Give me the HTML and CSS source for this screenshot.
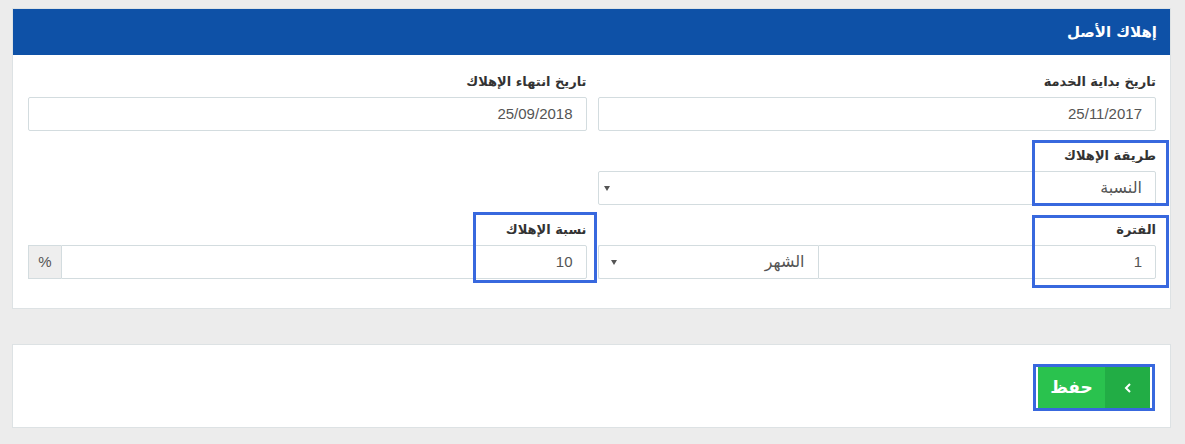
FILE: index.html
```html
<!DOCTYPE html>
<html lang="ar" dir="rtl">
<head>
    <meta charset="UTF-8">
    <title>إهلاك الأصل</title>
    <link rel="stylesheet" href="styles.css">
</head>
<body>
    <div class="page">
        <!-- لوحة الإهلاك -->
        <div class="panel">
            <div class="panel-head">إهلاك الأصل</div>
            <div class="panel-body">
                <div class="row">
                    <div class="group">
                        <label>تاريخ بداية الخدمة</label>
                        <div class="field">25/11/2017</div>
                    </div>
                    <div class="group">
                        <label>تاريخ انتهاء الإهلاك</label>
                        <div class="field">25/09/2018</div>
                    </div>
                </div>
                <div class="row">
                    <div class="group">
                        <label>طريقة الإهلاك</label>
                        <div class="field select">النسبة</div>
                    </div>
                    <div class="group"></div>
                </div>
                <div class="row">
                    <div class="group">
                        <label>الفترة</label>
                        <div class="combo">
                            <div class="field period">1</div>
                            <div class="field select unit">الشهر</div>
                        </div>
                    </div>
                    <div class="group">
                        <label>نسبة الإهلاك</label>
                        <div class="combo">
                            <div class="field rate">10</div>
                            <div class="addon">%</div>
                        </div>
                    </div>
                </div>
            </div>
        </div>

        <!-- الحفظ -->
        <div class="panel actions">
            <button class="save">
                <span class="save-arrow">
                    <svg width="8" height="10" viewBox="0 0 8 10"><path d="M6 1 L2 5 L6 9" fill="none" stroke="#fff" stroke-width="2"/></svg>
                </span>
                <span class="save-text">حفظ</span>
            </button>
        </div>
    </div>

    <!-- مربعات التحديد -->
    <div class="mark mark-method"></div>
    <div class="mark mark-period"></div>
    <div class="mark mark-rate"></div>
    <div class="mark mark-save"></div>
</body>
</html>
```

FILE: styles.css
```css
/*初始化*/
html, body{
    margin: 0;
    padding: 0;
}
body{
    background: #ececec;
    font-family: "Liberation Sans", "DejaVu Sans", sans-serif;
    color: #333;
    position: relative;
    height: 444px;
    overflow: hidden;
}

.page{
    padding: 8px 14px 0 12px;
}

/*1.面板*/
.panel{
    background: #fff;
    border: 1px solid #dde2e4;
}
.panel-head{
    background: #0e51a7;
    color: #fff;
    height: 46px;
    line-height: 46px;
    padding-right: 13px;
    font-family: "DejaVu Sans", sans-serif;
    font-weight: bold;
    font-size: 15px;
}
.panel-body{
    padding: 18px 14px 29px 15px;
}

/*2.表单行*/
.row{
    display: grid;
    grid-template-columns: 1fr 1fr;
    column-gap: 11px;
    margin-bottom: 16px;
}
.row:last-child{
    margin-bottom: 0;
}
label{
    display: block;
    height: 17px;
    line-height: 17px;
    margin-bottom: 7px;
    font-family: "DejaVu Sans", sans-serif;
    font-weight: bold;
    font-size: 13px;
    color: #333;
}
.field{
    height: 34px;
    box-sizing: border-box;
    border: 1px solid #d3dcdf;
    border-radius: 2px;
    padding: 0 13px;
    line-height: 32px;
    font-size: 15px;
    color: #555;
    background: #fff;
}

/*3.下拉框*/
.select{
    position: relative;
    font-family: "DejaVu Sans", sans-serif;
    font-size: 16px;
}
.select::after{
    content: "";
    position: absolute;
    left: 5px;
    top: 14px;
    border-top: 5px solid #555;
    border-left: 3px solid transparent;
    border-right: 3px solid transparent;
}
.unit::after{
    left: 12px;
}

/*4.组合输入*/
.combo{
    display: flex;
}
.period{
    flex: 1;
    border-radius: 0 2px 2px 0;
}
.unit{
    width: 220px;
    border-right: none;
    border-radius: 2px 0 0 2px;
}
.rate{
    flex: 1;
    border-radius: 0 2px 2px 0;
}
.addon{
    width: 33px;
    height: 34px;
    box-sizing: border-box;
    border: 1px solid #d3dcdf;
    border-right: none;
    background: #eee;
    color: #555;
    text-align: center;
    line-height: 32px;
    font-size: 15px;
}

/*5.保存按钮*/
.actions{
    margin-top: 35px;
    height: 84px;
    box-sizing: border-box;
    padding: 21px 20px 0;
}
.save{
    display: flex;
    height: 43px;
    padding: 0;
    border: none;
    cursor: pointer;
    font-family: "DejaVu Sans", sans-serif;
}
.save-arrow{
    width: 45px;
    background: #22ad45;
    display: flex;
    align-items: center;
    justify-content: center;
}
.save-text{
    width: 67px;
    background: #2ac24e;
    color: #fff;
    font-weight: bold;
    font-size: 17px;
    line-height: 43px;
    text-align: center;
}

/*6.蓝色标记框*/
.mark{
    position: absolute;
    border: 3px solid #3868de;
    box-sizing: border-box;
}
.mark-method{
    left: 1032px;
    top: 140px;
    width: 137px;
    height: 66px;
}
.mark-period{
    left: 1032px;
    top: 215px;
    width: 137px;
    height: 73px;
}
.mark-rate{
    left: 473px;
    top: 212px;
    width: 124px;
    height: 71px;
}
.mark-save{
    left: 1033px;
    top: 364px;
    width: 122px;
    height: 47px;
}
```
